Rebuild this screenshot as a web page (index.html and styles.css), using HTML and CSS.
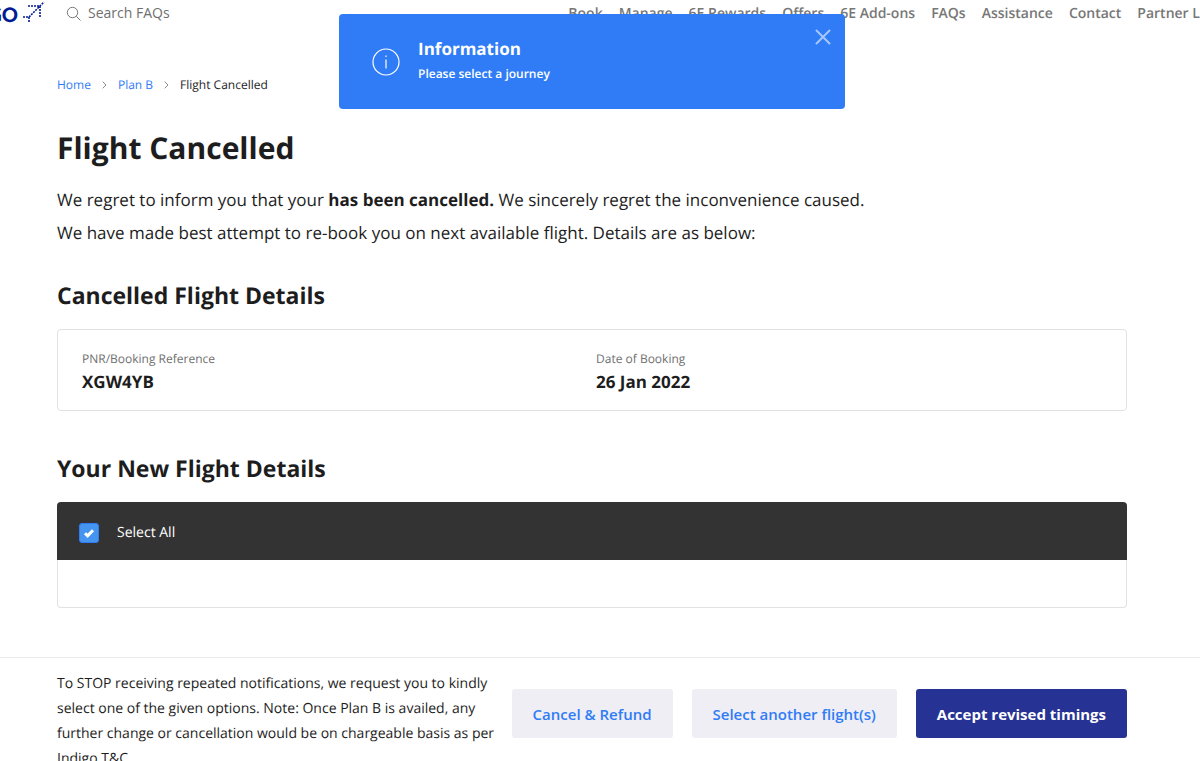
FILE: index.html
```html
<!DOCTYPE html>
<html lang="en">
  <head>
    <meta charset="UTF-8" />
    <meta name="viewport" content="width=device-width, initial-scale=1.0" />
    <title>Plan B - Flight Cancelled</title>
    <link rel="stylesheet" href="styles.css" />
  </head>
  <body>
    <header class="header">
      <a href="#" class="logo" aria-label="IndiGo">
        <span class="logo-text">IndiGO</span>
        <svg class="logo-plane" width="24" height="24" viewBox="0 0 24 24" aria-hidden="true">
          <path d="M6 6H18M18 6V18M1 17H7M7 17V23M7 17L22 2" />
        </svg>
      </a>
      <label class="search">
        <svg width="16" height="16" viewBox="0 0 16 16" aria-hidden="true">
          <circle cx="6.5" cy="6.5" r="5.2" />
          <path d="M10.3 10.3L14.5 14.5" />
        </svg>
        <input type="text" placeholder="Search FAQs" aria-label="Search FAQs" />
      </label>
      <nav class="nav">
        <a href="#">Book</a>
        <a href="#">Manage</a>
        <a href="#">6E Rewards</a>
        <a href="#">Offers</a>
        <a href="#">6E Add-ons</a>
        <a href="#">FAQs</a>
        <a href="#">Assistance</a>
        <a href="#">Contact</a>
        <a href="#">Partner Login</a>
      </nav>
    </header>

    <!-- notification -->
    <div class="toast" role="alert">
      <svg class="toast-icon" width="28" height="28" viewBox="0 0 28 28" aria-hidden="true">
        <circle cx="14" cy="14" r="13" />
        <path d="M14 11.5V20.5M14 7.5V9" />
      </svg>
      <div>
        <p class="toast-title">Information</p>
        <p class="toast-text">Please select a journey</p>
      </div>
      <button type="button" class="toast-close" aria-label="Close">
        <svg width="16" height="16" viewBox="0 0 16 16" aria-hidden="true">
          <path d="M1.5 1.5L14.5 14.5M14.5 1.5L1.5 14.5" />
        </svg>
      </button>
    </div>

    <main class="content">
      <nav class="breadcrumb">
        <a href="#">Home</a>
        <svg width="5" height="8" viewBox="0 0 5 8" aria-hidden="true"><path d="M0.7 0.7L4 4L0.7 7.3" /></svg>
        <a href="#">Plan B</a>
        <svg width="5" height="8" viewBox="0 0 5 8" aria-hidden="true"><path d="M0.7 0.7L4 4L0.7 7.3" /></svg>
        <span>Flight Cancelled</span>
      </nav>

      <h1>Flight Cancelled</h1>
      <p class="intro">
        We regret to inform you that your <b>has been cancelled.</b> We
        sincerely regret the inconvenience caused.<br />
        We have made best attempt to re-book you on next available flight.
        Details are as below:
      </p>

      <h2>Cancelled Flight Details</h2>
      <dl class="card booking">
        <div>
          <dt>PNR/Booking Reference</dt>
          <dd>XGW4YB</dd>
        </div>
        <div>
          <dt>Date of Booking</dt>
          <dd>26 Jan 2022</dd>
        </div>
      </dl>

      <h2>Your New Flight Details</h2>
      <div class="card flights">
        <label class="select-all">
          <input type="checkbox" checked />
          <svg class="tick" width="12" height="10" viewBox="0 0 12 10" aria-hidden="true">
            <path d="M2 5.2L4.6 7.8L10 2.2" />
          </svg>
          <span>Select All</span>
        </label>
      </div>
    </main>

    <footer class="actions">
      <p class="note">
        To STOP receiving repeated notifications, we request you to kindly
        select one of the given options. Note: Once Plan B is availed, any
        further change or cancellation would be on chargeable basis as per
        Indigo T&amp;C.
      </p>
      <div class="buttons">
        <button type="button" class="btn">Cancel &amp; Refund</button>
        <button type="button" class="btn">Select another flight(s)</button>
        <button type="button" class="btn btn-primary">Accept revised timings</button>
      </div>
    </footer>
  </body>
</html>
```
FILE: styles.css
```css
* {
  margin: 0;
  padding: 0;
  box-sizing: border-box;
}
html {
  overflow-x: hidden;
}
body {
  font-family: "Open Sans", "Noto Sans", sans-serif;
  font-size: 14px;
  color: #1d1d1d;
  background-color: #fff;
  text-rendering: geometricPrecision;
}
a {
  text-decoration: none;
}
svg {
  fill: none;
  flex-shrink: 0;
}

/* header */
.header {
  display: flex;
  height: 32px;
  overflow: hidden;
}
.logo {
  display: flex;
  justify-content: flex-end;
  width: 46px;
  color: #001b94;
}
.logo-text {
  font-family: Lato, sans-serif;
  font-size: 20px;
  font-weight: 900;
  line-height: 30px;
}
.logo-plane {
  margin-left: 4px;
  stroke: #001b94;
  stroke-width: 1.6;
  stroke-dasharray: 2 1;
}
.search {
  display: flex;
  gap: 6px;
  margin-left: 20px;
}
.search svg {
  margin-top: 6px;
  stroke: #777;
}
.search input {
  width: 160px;
  height: 25px;
  border: none;
  outline: none;
  font: inherit;
  color: #6f6f6f;
}
.search input::placeholder {
  color: #6f6f6f;
}
.nav {
  display: flex;
  gap: 16px;
  margin-left: auto;
  margin-right: -29px;
  line-height: 27px;
  white-space: nowrap;
}
.nav a {
  font-weight: 600;
  color: #777;
}

/* notification */
.toast {
  position: fixed;
  top: 14px;
  left: calc(50% - 8px);
  transform: translateX(-50%);
  display: flex;
  gap: 18px;
  width: 506px;
  height: 95px;
  padding: 22px 33px;
  border-radius: 4px;
  background-color: #307cf6;
  color: #fff;
}
.toast-icon {
  margin-top: 12px;
  stroke: #fff;
  stroke-width: 1.2;
}
.toast-title {
  font-size: 17px;
  font-weight: 700;
  line-height: 26px;
}
.toast-text {
  font-size: 12px;
  font-weight: 600;
  line-height: 23px;
}
.toast-close {
  position: absolute;
  top: 15px;
  right: 14px;
  width: 16px;
  height: 16px;
  border: none;
  background: none;
  cursor: pointer;
}
.toast-close svg {
  display: block;
  stroke: #a5c7fb;
  stroke-width: 2;
  stroke-linecap: round;
}

/* page content */
.content {
  padding: 44px 73px 49px 57px;
}
.breadcrumb {
  display: flex;
  align-items: center;
  gap: 11px;
  font-size: 12px;
  line-height: 18px;
}
.breadcrumb a {
  color: #307cf6;
}
.breadcrumb svg {
  stroke: #8a8a8a;
}
h1 {
  margin-top: 32px;
  font-size: 30px;
  line-height: 44px;
}
.intro {
  margin-top: 13px;
  font-size: 17px;
  line-height: 33px;
}
h2 {
  margin-top: 30px;
  font-size: 23px;
  line-height: 32px;
}
.card {
  margin-top: 18px;
  border: 1px solid #e1e1e1;
  border-radius: 4px;
}
.booking {
  display: grid;
  grid-template-columns: 1fr 1fr;
  height: 82px;
  padding: 18px 16px 0 24px;
}
dt {
  font-size: 12px;
  line-height: 22px;
  color: #6f6f6f;
}
dd {
  font-size: 17px;
  font-weight: 700;
  line-height: 24px;
}
.booking + h2 {
  margin-top: 41px;
}
.flights {
  height: 106px;
  border-top: none;
}
.select-all {
  display: flex;
  align-items: center;
  gap: 18px;
  height: 58px;
  margin: 0 -1px;
  padding: 3px 22px 0;
  border-radius: 4px 4px 0 0;
  background-color: #333;
  color: #fff;
  position: relative;
}
.select-all input {
  appearance: none;
  width: 20px;
  height: 20px;
  border: 1px solid #307cf6;
  border-radius: 3px;
  background-color: #4595f0;
}
.tick {
  position: absolute;
  left: 26px;
  stroke: #fff;
  stroke-width: 3;
}

/* bottom bar */
.actions {
  display: flex;
  align-items: flex-start;
  justify-content: space-between;
  padding: 13px 73px 13px 57px;
  border-top: 1px solid #ececec;
}
.note {
  width: 448px;
  line-height: 25px;
}
.buttons {
  display: flex;
  gap: 19px;
  margin-top: 18px;
}
.btn {
  height: 49px;
  padding: 0 21px;
  border: none;
  border-radius: 3px;
  background-color: #efeef4;
  font: inherit;
  font-size: 15px;
  font-weight: 600;
  color: #307cf6;
  white-space: nowrap;
  cursor: pointer;
}
.btn-primary {
  background-color: #263294;
  font-weight: 700;
  color: #fff;
}
```
